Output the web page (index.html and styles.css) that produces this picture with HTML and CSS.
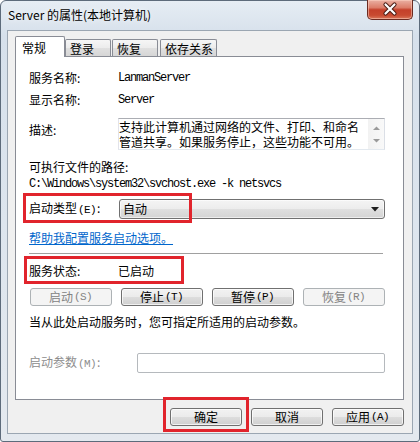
FILE: index.html
```html
<!DOCTYPE html>
<html lang="zh-CN">
<head>
<meta charset="utf-8">
<title>Server 的属性(本地计算机)</title>
<link rel="stylesheet" href="styles.css">
</head>
<body>
<div class="window">
  <div class="titlebar">
    <span class="title">Server 的属性(本地计算机)</span>
    <div class="close">
      <svg width="44" height="18" viewBox="0 0 44 18">
        <path d="M17.5 4.5 L26.5 13.5 M26.5 4.5 L17.5 13.5" stroke="#4a1c14" stroke-width="4.2" stroke-linecap="round"/>
        <path d="M17.5 4.5 L26.5 13.5 M26.5 4.5 L17.5 13.5" stroke="#ffffff" stroke-width="2.2" stroke-linecap="round"/>
      </svg>
    </div>
  </div>
  <div class="client">
    <div class="tabs">
      <div class="tab sel">常规</div>
      <div class="tab t2">登录</div>
      <div class="tab t3">恢复</div>
      <div class="tab t4">依存关系</div>
    </div>
    <div class="panel">
      <div class="row r1"><span class="lbl">服务名称:</span><span class="mono">LanmanServer</span></div>
      <div class="row r2"><span class="lbl">显示名称:</span><span class="mono">Server</span></div>
      <div class="row r3">
        <span class="lbl desc-lbl">描述:</span>
        <div class="descbox">
          <div class="desctext">支持此计算机通过网络的文件、打印、和命名<br>管道共享。如果服务停止，这些功能不可用。</div>
          <div class="vscroll">
            <svg width="9" height="6" viewBox="0 0 9 6"><path d="M1 5 L4.5 1.5 L8 5 Z" fill="#9a9a9a"/></svg>
            <svg width="9" height="6" viewBox="0 0 9 6"><path d="M1 1 L4.5 4.5 L8 1 Z" fill="#9a9a9a"/></svg>
          </div>
        </div>
      </div>
      <div class="row r4">可执行文件的路径:</div>
      <div class="row r5"><span class="mono">C:\Windows\system32\svchost.exe -k netsvcs</span></div>
      <div class="row r6">
        <span class="lbl">启动类型<span class="k">(E)</span>:</span>
        <div class="combo">
          <span>自动</span>
          <svg width="8" height="5" viewBox="0 0 8 5"><path d="M0 0 H8 L4 4.5 Z" fill="#1e1e1e"/></svg>
        </div>
        <div class="mark m1"></div>
      </div>
      <div class="row r7"><span class="link">帮助我配置服务启动选项。</span></div>
      <div class="sep"></div>
      <div class="row r8">
        <span class="lbl">服务状态:</span><span>已启动</span>
        <div class="mark m2"></div>
      </div>
      <div class="btnrow">
        <div class="btn dis">启动<span class="k">(S)</span></div>
        <div class="btn">停止<span class="k">(T)</span></div>
        <div class="btn">暂停<span class="k">(P)</span></div>
        <div class="btn dis">恢复<span class="k">(R)</span></div>
      </div>
      <div class="row r10">当从此处启动服务时，您可指定所适用的启动参数。</div>
      <div class="row r11">
        <span class="lbl lbl-wide dis-text">启动参数<span class="k">(M)</span>:</span>
        <div class="input"></div>
      </div>
    </div>
    <div class="footer">
      <div class="btn fbtn ok">确定<div class="mark m3"></div></div>
      <div class="btn fbtn">取消</div>
      <div class="btn fbtn">应用<span class="k">(A)</span></div>
    </div>
  </div>
</div>
</body>
</html>
```
FILE: styles.css
```css
* { box-sizing: border-box; }

body {
  margin: 0;
  font-family: "Noto Sans CJK SC", "Microsoft YaHei", sans-serif;
  font-size: 12px;
  color: #000;
  background: #ffffff;
}

.window {
  width: 420px;
  height: 442px;
  border: 1px solid #5d6b7b;
  border-radius: 6px 6px 3px 3px;
  background: linear-gradient(180deg, #e6edf4 0%, #d6e0eb 8%, #dde5ee 50%, #e4e9ef 100%);
  display: flex;
  flex-direction: column;
}

.titlebar {
  height: 29px;
  flex: none;
  display: flex;
  align-items: flex-start;
  padding-left: 7px;
}

.title {
  line-height: 28px;
  font-size: 12px;
  color: #000;
  text-shadow: 0 0 6px rgba(255, 255, 255, 0.9);
}

.close {
  margin-left: auto;
  margin-right: 6px;
  margin-top: -1px;
  width: 46px;
  height: 20px;
  border: 1px solid #6b2b21;
  border-top: none;
  border-radius: 0 0 5px 5px;
  background: linear-gradient(180deg, #eab0a3 0%, #dc7d69 40%, #c4402a 52%, #c84a30 80%, #d9765a 100%);
  box-shadow: inset 0 0 0 1px rgba(255, 215, 200, 0.5);
}

.close svg { display: block; margin: 0 auto; }

.client {
  flex: 1;
  margin: 0 6px 7px;
  border: 1px solid #9ba6b2;
  background: #f0f0f0;
  padding: 5px 8px 0 7px;
  display: flex;
  flex-direction: column;
}

.tabs {
  height: 20px;
  display: flex;
  align-items: flex-end;
}

.tab {
  height: 17px;
  border: 1px solid #898c95;
  border-bottom: none;
  border-radius: 2px 2px 0 0;
  background: linear-gradient(180deg, #f6f6f6 0%, #ececec 50%, #e0e0e0 51%, #d6d6d6 100%);
  padding: 1px 0 0 4px;
  line-height: 15px;
  font-size: 12px;
}

.tab.sel {
  width: 50px;
  height: 21px;
  margin-bottom: -1px;
  background: #ffffff;
  position: relative;
  z-index: 1;
  padding: 3px 0 0 6px;
  line-height: 16px;
}

.tab.t2 { width: 46px; }
.tab.t3 { width: 46px; margin-left: 1px; }
.tab.t4 { width: 57px; margin-left: 2px; }

.panel {
  height: 344px;
  flex: none;
  border: 1px solid #898c95;
  background: #ffffff;
  padding: 0 18px 0 13px;
  display: flex;
  flex-direction: column;
}

.row {
  display: flex;
  align-items: center;
  height: 16px;
  line-height: 16px;
  position: relative;
  white-space: nowrap;
}

.lbl { width: 89px; flex: none; }
.lbl-wide { width: 108px; }
.dis-text { color: #8d8d8d; }

.mono {
  font-family: "Liberation Mono", "DejaVu Sans Mono", monospace;
  font-size: 12px;
  letter-spacing: -1.2px;
}

.k {
  font-family: "Liberation Mono", "DejaVu Sans Mono", monospace;
  font-size: 11px;
  letter-spacing: -0.6px;
  margin: 0 1px;
}

.r1 { margin-top: 13px; }
.r2 { margin-top: 6px; }

.r3 {
  margin-top: 10px;
  height: 32px;
  align-items: flex-start;
}

.desc-lbl { margin-top: 4px; }

.descbox {
  width: 267px;
  height: 32px;
  border: 1px solid;
  border-color: #abadb3 #dbdfe6 #e3e9ef #e2e3ea;
  background: #ffffff;
  display: flex;
}

.desctext {
  flex: 1;
  padding-top: 0;
  line-height: 15px;
  overflow: hidden;
}

.vscroll {
  width: 16px;
  flex: none;
  background: linear-gradient(90deg, #f2f2f2, #f9f9f9);
  display: flex;
  flex-direction: column;
  align-items: center;
  justify-content: space-around;
  padding: 3px 0 2px;
}

.vscroll svg { display: block; }

.r4 { margin-top: 9px; }
.r5 { margin-top: 1px; }

.r6 {
  margin-top: 7px;
  height: 20px;
}

.combo {
  margin-left: 1px;
  width: 266px;
  height: 20px;
  border: 1px solid #707070;
  border-radius: 3px;
  background: linear-gradient(180deg, #f4f4f4 0%, #ececec 50%, #dfdfdf 51%, #d4d4d4 100%);
  box-shadow: inset 0 0 0 1px rgba(255, 255, 255, 0.6);
  display: flex;
  align-items: center;
  justify-content: space-between;
  padding: 0 5px 0 3px;
}

.combo svg { display: block; }

.r7 { margin-top: 11px; }

.link {
  color: #0066cc;
  text-decoration: underline;
}

.sep {
  margin-top: 7px;
  margin-right: 2px;
  height: 2px;
  border-top: 1px solid #a0a0a0;
  border-bottom: 1px solid #ffffff;
}

.r8 { margin-top: 8px; }

.btnrow {
  margin-top: 9px;
  margin-left: 1px;
  display: grid;
  grid-template-columns: repeat(4, 82px);
  column-gap: 9px;
}

.btn {
  height: 18px;
  border: 1px solid #707070;
  border-radius: 3px;
  background: linear-gradient(180deg, #f2f2f2 0%, #ebebeb 50%, #dddddd 51%, #cfcfcf 100%);
  box-shadow: inset 0 0 0 1px rgba(255, 255, 255, 0.7);
  display: flex;
  align-items: center;
  justify-content: center;
  line-height: 16px;
  position: relative;
  white-space: nowrap;
}

.btn.dis {
  border-color: #adb2b5;
  background: #f4f4f4;
  box-shadow: none;
  color: #838383;
}

.r10 { margin-top: 8px; }

.r11 {
  margin-top: 23px;
  height: 20px;
}

.input {
  width: 248px;
  height: 20px;
  border: 1px solid #b5b9bd;
  border-radius: 2px;
  background: #ffffff;
}

.footer {
  margin-top: 8px;
  display: flex;
  justify-content: flex-end;
  column-gap: 9px;
}

.fbtn { width: 72px; }

.mark {
  position: absolute;
  border: 3px solid #e1242c;
  pointer-events: none;
  z-index: 2;
}

.m1 { left: -6px; top: -6px; width: 169px; height: 30px; }
.m2 { left: -5px; top: -7px; width: 160px; height: 28px; }
.m3 { left: -8px; top: -12px; width: 86px; height: 35px; }
```
